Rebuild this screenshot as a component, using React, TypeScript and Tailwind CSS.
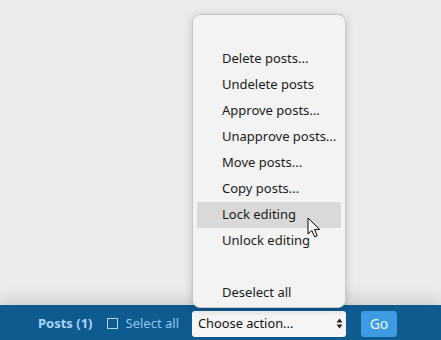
const actions = [
  '',
  'Delete posts...',
  'Undelete posts',
  'Approve posts...',
  'Unapprove posts...',
  'Move posts...',
  'Copy posts...',
  'Lock editing',
  'Unlock editing',
  '',
  'Deselect all',
];

const Cursor = () => (
  <svg width="14" height="22" viewBox="0 0 14 22" className="absolute left-[307px] top-[217px]">
    <path
      d="M1 1 L1 17 L4.8 13.4 L7.6 19.8 L10.2 18.7 L7.5 12.4 L12.6 12.4 Z"
      fill="#fff"
      stroke="#000"
      strokeWidth="1"
      strokeLinejoin="round"
    />
  </svg>
);

const App = () => {
  return (
    <div
      className="relative flex h-[340px] w-[441px] flex-col overflow-hidden bg-[#ebebeb]"
      style={{ fontFamily: '"Noto Sans", "Open Sans", sans-serif' }}
    >
      <div className="flex-1" />

      {/* bottom toolbar */}
      <div className="flex h-[35px] items-center bg-[#0f5a8f] pl-[38px] pt-[2px] text-[13px] shadow-[0_-8px_14px_rgba(0,0,0,0.10)]">
        <span className="font-bold text-[#a8d5fa]">Posts (1)</span>
        <span className="ml-[14px] h-[11px] w-[11px] border border-[#a8d5fa]" />
        <span className="ml-[8px] text-[#8fc6f0]">Select all</span>
        <div className="ml-[13px] flex h-[26px] w-[154px] items-center justify-between rounded-[3px] bg-[#f5f5f5] pl-[6px] pr-[3px] text-[12.8px] text-[#111]">
          <span>Choose action...</span>
          <svg width="7" height="11" viewBox="0 0 7 11">
            <path d="M3.5 0.5 L6.5 4.5 L0.5 4.5 Z M3.5 10.5 L6.5 6.5 L0.5 6.5 Z" fill="#222" />
          </svg>
        </div>
        <button className="ml-[15px] h-[26px] w-[36px] rounded-[3px] bg-[#3d9be1] text-[14px] text-[#e6f3fd]">
          Go
        </button>
      </div>

      {/* open dropdown list */}
      <div className="absolute left-[192px] top-[14px] w-[154px] rounded-[8px] border border-[#c8c8c8] bg-[#f3f3f3] px-[4px] pt-[5px] pb-[1px] shadow-[0_2px_8px_rgba(0,0,0,0.18)]">
        {actions.map((a, i) => (
          <div
            key={i}
            className={`flex h-[26px] items-center whitespace-nowrap rounded-[2px] pl-[25px] text-[13px] text-[#1a1a1a] ${
              a === 'Lock editing' ? 'bg-[#d9d9d9]' : ''
            }`}
          >
            {a}
          </div>
        ))}
      </div>

      <Cursor />
    </div>
  );
};

export default App;
